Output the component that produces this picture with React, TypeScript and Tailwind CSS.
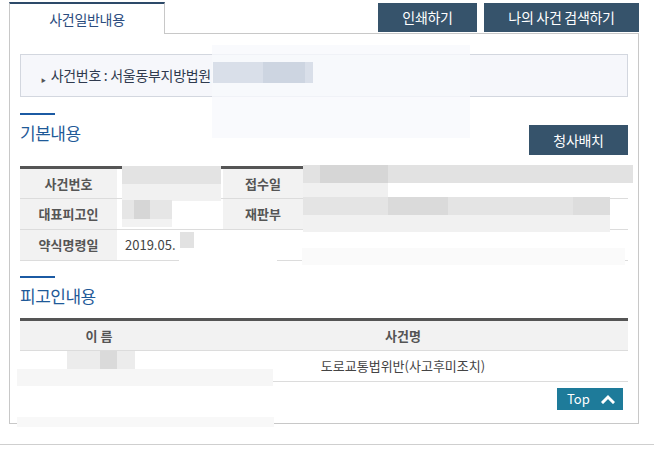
import React from 'react';

const font = { fontFamily: '"Noto Sans CJK KR", "Noto Sans", sans-serif' };

// pale patches that mask the redacted values in the screenshot
const Blur: React.FC<{ className: string }> = ({ className }) => (
  <div className={`absolute pointer-events-none ${className}`} />
);

const SectionTitle: React.FC<{ title: string }> = ({ title }) => (
  <div className="flex flex-col">
    <div className="w-[35px] h-[2px] bg-[#1b5aa3]" />
    <h3 className="mt-[8px] text-[17px] leading-[20px] text-[#1f5a98] tracking-[-0.5px]">{title}</h3>
  </div>
);

const Th: React.FC<{ children: React.ReactNode; className?: string }> = ({ children, className = '' }) => (
  <th className={`bg-[#f2f2f2] text-[13px] font-bold text-[#555] text-center align-middle ${className}`}>{children}</th>
);

export default function App() {
  return (
    <div className="w-[654px] h-[470px] bg-white relative overflow-hidden" style={font}>
      <div className="ml-[9px] w-[630px] pt-[2px]">
        {/* tabs + buttons */}
        <div className="flex items-start justify-between">
          <div className="relative z-10 -mb-px w-[156px] h-[32px] bg-white border-t-[2px] border-t-[#2d4a69] border-l border-r border-l-[#c8c8c8] border-r-[#c8c8c8] flex items-center justify-center text-[14px] tracking-[-0.3px] text-[#2b4c7e]">
            사건일반내용
          </div>
          <div className="flex gap-[7px] pt-[1px]">
            <button className="w-[99px] h-[29px] bg-[#36536b] text-white text-[14px] tracking-[-0.3px]">인쇄하기</button>
            <button className="w-[155px] h-[29px] bg-[#36536b] text-white text-[14px] tracking-[-0.3px]">나의 사건 검색하기</button>
          </div>
        </div>

        {/* panel */}
        <div className="relative border border-[#c8c8c8] h-[391px] px-[10px] pt-[20px]">
          <div className="h-[43px] border border-[#d3d7df] bg-[#f6f7fb] flex items-center pl-[20px] text-[14px] tracking-[-0.3px] text-[#2f3a4e]">
            <span className="text-[5px] text-[#555] mr-[5px] mt-[8px]">▶</span>
            <span>사건번호 : 서울동부지방법원</span>
          </div>
          <Blur className="left-[202px] top-[11px] w-[258px] h-[93px] bg-[#f8f9fc]/80" />
          <Blur className="left-[203px] top-[28px] w-[100px] h-[21px] bg-[#d9dfe9]" />
          <Blur className="left-[253px] top-[28px] w-[42px] h-[21px] bg-[#cdd5e1]" />

          {/* 기본내용 */}
          <div className="mt-[16px] flex items-end justify-between">
            <SectionTitle title="기본내용" />
            <button className="w-[99px] h-[30px] bg-[#36536b] text-white text-[14px] tracking-[-0.3px] mb-[-12px]">청사배치</button>
          </div>

          <table className="mt-[23px] w-full border-collapse border-t-[3px] border-t-[#555] text-[13px] text-[#333]">
            <tbody>
              <tr className="h-[31px] border-b border-[#dcdcdc]">
                <Th className="w-[97px]">사건번호</Th>
                <td className="relative w-[106px]">
                  <Blur className="left-[5px] top-[-3px] w-[99px] h-[18px] bg-[#e3e3e3]" />
                  <Blur className="left-[5px] top-[15px] w-[99px] h-[17px] bg-[#f1f1f1]" />
                </td>
                <Th className="w-[80px]">접수일</Th>
                <td className="relative">
                  <Blur className="left-0 top-[-4px] w-[330px] h-[18px] bg-[#e2e2e2]" />
                  <Blur className="left-[17px] top-[-4px] w-[68px] h-[18px] bg-[#d6d6d6]" />
                  <Blur className="left-0 top-[14px] w-[85px] h-[16px] bg-[#f0f0f0]" />
                </td>
              </tr>
              <tr className="h-[31px] border-b border-[#dcdcdc]">
                <Th>대표피고인</Th>
                <td className="relative">
                  <Blur className="left-[5px] top-[1px] w-[50px] h-[19px] bg-[#e6e6e6]" />
                  <Blur className="left-[17px] top-[1px] w-[16px] h-[19px] bg-[#d6d6d6]" />
                  <Blur className="left-[5px] top-[20px] w-[50px] h-[8px] bg-[#f2f2f2]" />
                </td>
                <Th>재판부</Th>
                <td className="relative">
                  <Blur className="left-0 top-[-2px] w-[307px] h-[18px] bg-[#e4e4e4]" />
                  <Blur className="left-[85px] top-[-2px] w-[60px] h-[18px] bg-[#dadada]" />
                  <Blur className="left-[270px] top-[-2px] w-[37px] h-[18px] bg-[#dddddd]" />
                  <Blur className="left-0 top-[16px] w-[307px] h-[17px] bg-[#f1f1f1]" />
                </td>
              </tr>
              <tr className="h-[31px] border-b border-[#dcdcdc]">
                <Th>약식명령일</Th>
                <td colSpan={3} className="relative pl-[8px] text-[13px] text-[#444]">
                  2019.05.
                  <Blur className="left-[63px] top-[2px] w-[14px] h-[17px] bg-[#e2e2e2]" />
                  <Blur className="left-[62px] top-[18px] w-[98px] h-[18px] bg-white" />
                  <Blur className="left-[185px] top-[18px] w-[323px] h-[17px] bg-[#fafafa]" />
                </td>
              </tr>
            </tbody>
          </table>

          {/* 피고인내용 */}
          <div className="mt-[15px]">
            <SectionTitle title="피고인내용" />
          </div>

          <table className="mt-[12px] w-full border-collapse border-t-[3px] border-t-[#555] text-[13px] text-[#444]">
            <thead>
              <tr className="h-[31px] border-b border-[#dcdcdc]">
                <Th className="w-[158px]">이 름</Th>
                <Th>사건명</Th>
              </tr>
            </thead>
            <tbody>
              <tr className="h-[31px] border-b border-[#dcdcdc]">
                <td className="relative">
                  <Blur className="left-[47px] top-0 w-[68px] h-[18px] bg-[#ececec]" />
                  <Blur className="left-[80px] top-0 w-[17px] h-[18px] bg-[#dadada]" />
                  <Blur className="left-[-3px] top-[18px] w-[256px] h-[17px] bg-[#f6f6f6]" />
                </td>
                <td className="text-center">도로교통법위반(사고후미조치)</td>
              </tr>
            </tbody>
          </table>

          <div className="mt-[6px] flex justify-end pr-[5px]">
            <button className="w-[66px] h-[22px] bg-[#1e7b9a] text-white text-[13px] flex items-center justify-between pl-[10px] pr-[8px]">
              <span>Top</span>
              <svg width="14" height="10" viewBox="0 0 14 10" fill="none">
                <polyline points="2,8 7,3 12,8" stroke="white" strokeWidth="3" strokeLinecap="square" />
              </svg>
            </button>
          </div>
          <Blur className="left-[7px] bottom-[-4px] w-[257px] h-[10px] bg-[#f8f8f8]" />
        </div>
      </div>

      <div className="mt-[20px] border-t border-[#cfcfcf]" />
    </div>
  );
}
